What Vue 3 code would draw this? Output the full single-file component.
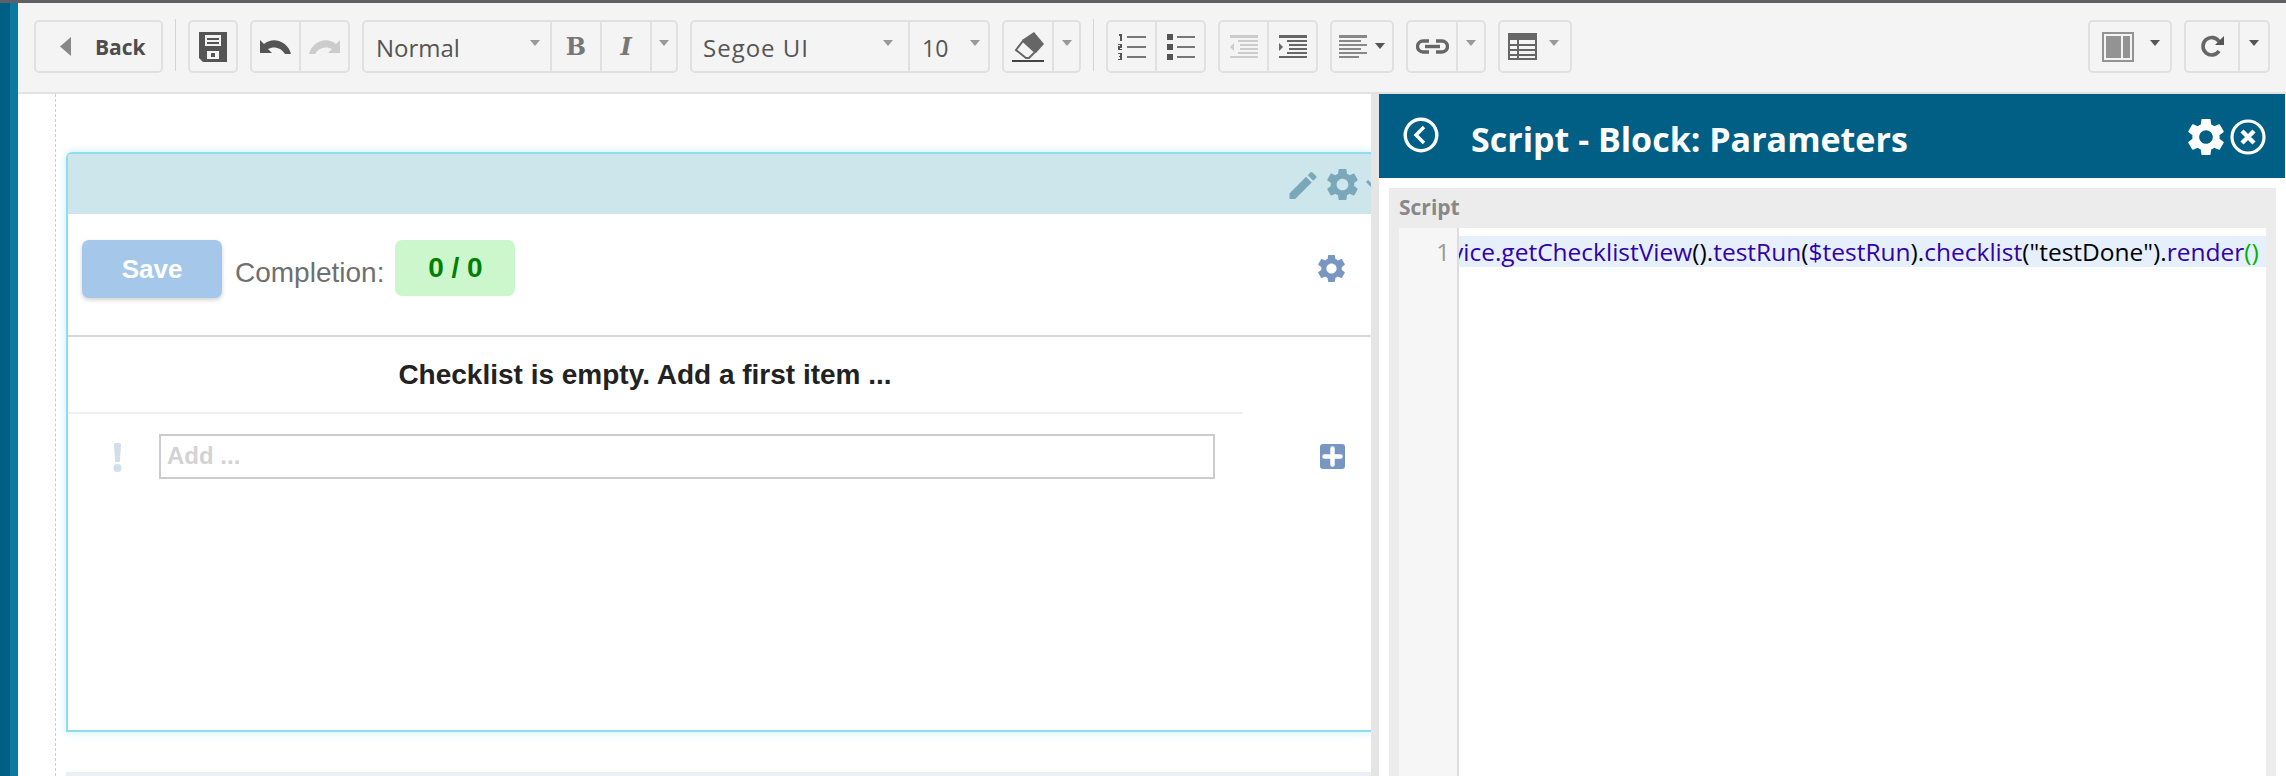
<script setup>
const GEAR = 'M19.14 12.94c.04-.3.06-.61.06-.94 0-.32-.02-.64-.07-.94l2.03-1.58c.18-.14.23-.41.12-.61l-1.92-3.32c-.12-.22-.37-.29-.59-.22l-2.39.96c-.5-.38-1.03-.7-1.62-.94l-.36-2.54c-.04-.24-.24-.41-.48-.41h-3.84c-.24 0-.43.17-.47.41l-.36 2.54c-.59.24-1.13.57-1.62.94l-2.39-.96c-.22-.08-.47 0-.59.22L2.74 8.87c-.12.21-.08.47.12.61l2.03 1.58c-.05.3-.09.63-.09.94s.02.64.07.94l-2.03 1.58c-.18.14-.23.41-.12.61l1.92 3.32c.12.22.37.29.59.22l2.39-.96c.5.38 1.03.7 1.62.94l.36 2.54c.05.24.24.41.48.41h3.84c.24 0 .44-.17.47-.41l.36-2.54c.59-.24 1.13-.56 1.62-.94l2.39.96c.22.08.47 0 .59-.22l1.92-3.32c.12-.22.07-.47-.12-.61l-2.01-1.58zM12 15.6c-1.98 0-3.6-1.62-3.6-3.6s1.62-3.6 3.6-3.6 3.6 1.62 3.6 3.6-1.62 3.6-3.6 3.6z'
const PENCIL = 'M3 17.25V21h3.75L17.81 9.94l-3.75-3.75L3 17.25zM20.71 7.04c.39-.39.39-1.02 0-1.41l-2.34-2.34c-.39-.39-1.02-.39-1.41 0l-1.83 1.83 3.75 3.75 1.83-1.83z'
</script>

<template>
  <div class="page">
    <div class="topline"></div>
    <div class="body">
      <div class="strip"><div class="strip-dark"></div><div class="strip-light"></div></div>
      <div class="workspace">
        <div class="toolbar">
          <div class="grp w129"><div class="cell back">
            <svg class="i-back" viewBox="0 0 11 19"><path d="M11 0v19L0 9.5z" fill="#888"/></svg>
            <span>Back</span>
          </div></div>
          <div class="sep"></div>
          <div class="grp w50"><div class="cell fill">
            <svg width="28" height="30" viewBox="0 0 28 30"><path fill-rule="evenodd" fill="#555" d="M0 0h28v30H4l-4-4zM6 3v11h16V3zM8 19v8h12v-8zM8 6h12v2H8zM8 10h12v2H8zM12 21h4v4h-4z"/></svg>
          </div></div>
          <div class="grp w100">
            <div class="cell c50">
              <svg width="31" height="15" viewBox="0 0 31 15"><path fill="#555" d="M0 1v13h12L8 10c5-3 13-2 17 5h6C28 3 14-3 4 5z"/></svg>
            </div>
            <div class="cell c50 div">
              <svg width="31" height="15" viewBox="0 0 31 15"><path fill="#ccc" d="M31 1v13H19l4-4c-5-3-13-2-17 5H0C3 3 17-3 27 5z"/></svg>
            </div>
          </div>
          <div class="grp w316">
            <div class="cell sel normal"><span class="tb-txt">Normal</span><i class="caret"></i></div>
            <div class="cell c50 div"><span class="fmt b">B</span></div>
            <div class="cell c50 div"><span class="fmt it">I</span></div>
            <div class="cell c26 div"><i class="caret sm"></i></div>
          </div>
          <div class="grp w300">
            <div class="cell sel font"><span class="tb-txt wide">Segoe UI</span><i class="caret"></i></div>
            <div class="cell sel size div"><span class="tb-txt ten">10</span><i class="caret"></i></div>
          </div>
          <div class="grp w79">
            <div class="cell c50">
              <svg width="32" height="30" viewBox="0 0 32 30"><path fill="#666" d="M22 0l10 12-8 9L10 8z"/><path fill="none" stroke="#666" stroke-width="2" d="M11 9l12 11-6 6h-3L4 18z"/><rect y="28" width="32" height="2" fill="#444"/></svg>
            </div>
            <div class="cell c28 div"><i class="caret sm"></i></div>
          </div>
          <div class="sep"></div>
          <div class="grp w100">
            <div class="cell c50">
              <svg width="28" height="27" viewBox="0 0 28 27"><path fill="#555" d="M1 1h3v7H2V3H1zM0 11h4v4H2v1h2v1H0v-4h2v-1H0zM0 20h4v7H0v-1h2v-2H1v-1h1v-2H0z"/><path fill="#777" d="M9 3h19v2H9zM9 13h19v2H9zM9 23h19v2H9z"/></svg>
            </div>
            <div class="cell c50 div">
              <svg width="28" height="27" viewBox="0 0 28 27"><path fill="#555" d="M0 1h6v6H0zM0 11h6v6H0zM0 21h6v6H0z"/><path fill="#777" d="M10 3h18v2H10zM10 13h18v2H10zM10 23h18v2H10z"/></svg>
            </div>
          </div>
          <div class="grp w100">
            <div class="cell c50">
              <svg width="28" height="23" viewBox="0 0 28 23"><path fill="#ccc" d="M0 0h28v3H0zM8 5h20v2H8zM10 9h18v2H10zM10 13h18v2H10zM8 17h20v2H8zM0 21h28v2H0zM4 8v8l-4-4z"/></svg>
            </div>
            <div class="cell c50 div">
              <svg width="28" height="23" viewBox="0 0 28 23"><path fill="#666" d="M0 0h28v3H0zM8 5h20v2H8zM10 9h18v2H10zM10 13h18v2H10zM8 17h20v2H8zM0 21h28v2H0zM0 8v8l4-4z"/></svg>
            </div>
          </div>
          <div class="grp w64"><div class="cell fill align">
            <svg width="28" height="23" viewBox="0 0 28 23"><path fill="#888" d="M0 0h28v3H0zM0 5h22v2H0zM0 9h28v2H0zM0 13h22v2H0zM0 17h28v2H0zM0 21h20v2H0z"/></svg>
            <i class="caret dark"></i>
          </div></div>
          <div class="grp w80">
            <div class="cell c50">
              <svg width="33" height="15" viewBox="0 0 33 15"><g fill="none" stroke="#666" stroke-width="3.4"><path d="M13 2H7a5.5 5.5 0 0 0 0 11h6"/><path d="M20 2h6a5.5 5.5 0 0 1 0 11h-6"/><path d="M9 7.5h15"/></g></svg>
            </div>
            <div class="cell c28 div"><i class="caret sm"></i></div>
          </div>
          <div class="grp w74"><div class="cell fill tbl">
            <svg width="29" height="27" viewBox="0 0 29 27"><path fill="#666" fill-rule="evenodd" d="M0 0h29v27H0zM2 7v4h7V7zM11 7v4h16V7zM2 13v3h7v-3zM11 13v3h16v-3zM2 18v3h7v-3zM11 18v3h16v-3zM2 23v2h7v-2zM11 23v2h16v-2z"/></svg>
            <i class="caret sm"></i>
          </div></div>

          <div class="grp w84 right-start"><div class="cell fill cols">
            <svg width="32" height="30" viewBox="0 0 32 30"><path fill="#939393" fill-rule="evenodd" d="M0 0h32v30H0zM2 2v26h28V2z"/><path fill="#939393" d="M4 4h15v22H4zM21 4h7v22h-7z"/></svg>
            <i class="caret dark"></i>
          </div></div>
          <div class="grp w86">
            <div class="cell reload">
              <svg width="23" height="23" viewBox="0 0 23 23"><path fill="none" stroke="#666" stroke-width="3.6" d="M18 16a8.7 8.7 0 1 1 0-9.5"/><path fill="#555" d="M23 1v9h-9z"/></svg>
            </div>
            <div class="cell c30 div"><i class="caret dark"></i></div>
          </div>
        </div>

        <div class="main">
          <div class="canvas">
            <div class="guide">
              <section class="card">
                <header class="card-head">
                  <svg class="pencil" viewBox="3 3 18 18"><path :d="PENCIL"/></svg>
                  <svg class="h-gear" viewBox="2.5 2.5 19 19"><path :d="GEAR"/></svg>
                  <svg class="h-chev" viewBox="0 0 12 8"><path d="M1 1l5 5 5-5" fill="none" stroke="#7ba7bb" stroke-width="3"/></svg>
                </header>
                <div class="actions">
                  <button class="save">Save</button>
                  <span class="compl">Completion:</span>
                  <span class="badge">0 / 0</span>
                  <svg class="a-gear" viewBox="2.5 2.5 19 19"><path :d="GEAR"/></svg>
                </div>
                <h2 class="empty">Checklist is empty. Add a first item ...</h2>
                <div class="add">
                  <svg class="excl" viewBox="0 0 9 29"><path d="M1 1.500Q1 0 2.500 0h4Q8 0 8 1.500L7 18q0 1-1 1H3q-1 0-1-1zM4.500 21a4 4 0 1 1 0 8 4 4 0 1 1 0-8z"/></svg>
                  <div class="input">Add ...</div>
                  <svg class="plus" viewBox="0 0 25 25"><rect width="25" height="25" rx="3" fill="#7896c2"/><path d="M4.500 12.500h16M12.500 4.500v16" stroke="#fff" stroke-width="4.500" stroke-linecap="round"/></svg>
                </div>
              </section>
              <div class="next"></div>
            </div>
          </div>

          <aside class="panel">
            <div class="panel-head">
              <svg class="p-back" viewBox="0 0 36 36"><circle cx="18" cy="18" r="15.800" fill="none" stroke="#fff" stroke-width="3.400"/><path d="M21 10l-8 8 8 8" fill="none" stroke="#fff" stroke-width="3.400"/></svg>
              <h1 class="p-title">Script - Block: Parameters</h1>
              <svg class="p-gear" viewBox="2.500 2.500 19 19"><path :d="GEAR" fill="#fff"/></svg>
              <svg class="p-close" viewBox="0 0 36 36"><circle cx="18" cy="18" r="16" fill="none" stroke="#fff" stroke-width="3.200"/><path d="M12 12l12 12M24 12L12 24" fill="none" stroke="#fff" stroke-width="4.400"/></svg>
            </div>
            <div class="p-section">
              <div class="p-label">Script</div>
              <div class="editor">
                <div class="gutter"><div class="ln">1</div></div>
                <div class="code"><div class="line"><span class="nm">vice.getChecklistView</span><span class="pn">()</span><span class="pn">.</span><span class="nm">testRun</span><span class="pn">(</span><span class="nm">$testRun</span><span class="pn">).</span><span class="nm">checklist</span><span class="pn">("testDone").</span><span class="nm">render</span><span class="ok">()</span></div></div>
              </div>
            </div>
          </aside>
        </div>
      </div>
    </div>
  </div>
</template>

<style scoped>
.page { width: 2286px; height: 776px; overflow: hidden; display: flex; flex-direction: column; background: #fff; font-family: "Liberation Sans", Arial, sans-serif; }
.topline { height: 3px; background: #5f5f64; flex: none; }
.body { flex: 1; display: flex; min-height: 0; }
.strip { width: 18px; flex: none; display: flex; }
.strip-dark { width: 10px; background: #005f87; }
.strip-light { width: 8px; background: #0b7a9f; }
.workspace { flex: 1; display: flex; flex-direction: column; min-width: 0; }

.toolbar { flex: none; border-bottom: 2px solid #e2e2e2; background: #f4f4f4; display: flex; align-items: flex-start; gap: 12px; padding: 17px 16px 0; box-sizing: border-box; height: 91px; font-family: "Open Sans", "Liberation Sans", sans-serif; }
.grp { height: 53px; box-sizing: border-box; border: 2px solid #e0e0e0; border-radius: 5px; display: flex; flex: none; }
.sep { width: 1px; height: 52px; margin-top: -1px; background: #d4d4d4; flex: none; }
.w129 { width: 129px; } .w50 { width: 50px; } .w100 { width: 100px; } .w316 { width: 316px; } .w300 { width: 300px; }
.w79 { width: 79px; } .w64 { width: 64px; } .w80 { width: 80px; } .w74 { width: 74px; } .w84 { width: 84px; } .w86 { width: 86px; }
.right-start { margin-left: auto; }
.cell { display: flex; align-items: center; justify-content: center; box-sizing: border-box; height: 100%; }
.fill { width: 100%; }
.div { border-left: 2px solid #e0e0e0; }
.c50 { width: 50px; } .c50:first-child { width: 48px; }
.c26 { width: 26px; } .c28 { width: 27px; } .c30 { width: 30px; }
.back { width: 100%; justify-content: flex-start; padding-left: 24px; font-weight: 700; font-size: 21px; color: #4d4d4d; }
.i-back { width: 11px; height: 19px; margin-right: 24px; }
.sel { justify-content: space-between; }
.normal { width: 186px; padding: 0 10px 0 12px; }
.font { width: 216px; padding: 0 15px 0 11px; }
.size { width: 80px; padding: 0 8px 0 12px; }
.tb-txt { font-size: 24px; color: #555; position: relative; top: 1px; }
.wide { letter-spacing: 1px; }
.ten { font-size: 23px; }
.caret { display: block; width: 0; height: 0; border-left: 5.500px solid transparent; border-right: 5.500px solid transparent; border-top: 6px solid #999; margin-top: -8px; flex: none; }
.caret.sm { border-left-width: 5px; border-right-width: 5px; }
.caret.dark { border-top-color: #555; }
.fmt { font-family: "DejaVu Serif", serif; font-weight: 700; font-size: 24px; color: #777; line-height: 1; }
.it { font-style: italic; }
.align { justify-content: flex-start; padding-left: 7px; gap: 8px; }
.align .caret { margin-top: -2px; }
.tbl { justify-content: flex-start; padding-left: 8px; gap: 12px; }
.cols { justify-content: flex-start; padding-left: 12px; gap: 16px; }
.reload { width: 53px; }

.main { flex: 1; display: flex; min-height: 0; }
.canvas { width: 1353px; flex: none; overflow: hidden; background: #fff; }
.guide { margin-left: 37px; height: 100%; border-left: 1px dashed #ccc; padding-left: 10px; padding-top: 58px; box-sizing: border-box; }
.card { height: 580px; box-sizing: border-box; border: 2px solid #8fdcef; border-right: 0; border-radius: 6px 0 0 0; box-shadow: 0 0 8px rgba(143, 220, 239, .55); display: flex; flex-direction: column; background: #fff; }
.card-head { height: 60px; flex: none; background: #cde6eb; position: relative; display: flex; align-items: center; overflow: hidden; padding-left: 1221px; }
.pencil { width: 28px; height: 27px; fill: #7ba7bb; flex: none; margin-top: 2px; }
.h-gear { width: 31px; height: 31px; fill: #7ba7bb; margin-left: 10px; flex: none; }
.h-chev { width: 12px; height: 8px; margin-left: 8px; flex: none; }
.actions { height: 123px; flex: none; box-sizing: border-box; border-bottom: 2px solid #d5d8dc; display: flex; align-items: flex-start; padding: 26px 26px 0 14px; }
.save { width: 140px; height: 58px; border: 0; border-radius: 7px; background: #a5c8ea; color: #fff; font: 700 26px "Liberation Sans", Arial, sans-serif; box-shadow: 0 2px 4px rgba(0, 0, 0, .18); }
.compl { margin-left: 13px; margin-top: 14px; font-size: 28px; line-height: 38px; color: #6f6f6f; }
.badge { margin-left: 11px; width: 120px; height: 56px; border-radius: 7px; background: #ccf7cd; color: #008000; font-weight: 700; font-size: 28px; display: flex; align-items: center; justify-content: center; }
.a-gear { width: 27px; height: 27px; fill: #7896c2; margin-left: auto; margin-top: 15px; }
.empty { margin: 0; width: 1175px; height: 77px; box-sizing: border-box; padding-right: 21px; border-bottom: 2px solid #f0f0f0; text-align: center; font-size: 28px; line-height: 76px; font-weight: 700; color: #222; }
.add { display: flex; align-items: flex-start; padding-top: 20px; }
.excl { width: 9px; height: 29px; fill: #d3deeb; margin: 9px 37px 0 45px; flex: none; }
.input { width: 1056px; height: 45px; box-sizing: border-box; border: 2px solid #ccc; padding-left: 6px; font-size: 24px; line-height: 39px; font-weight: 700; color: #d3d3d3; flex: none; }
.plus { width: 25px; height: 25px; margin: 10px 0 0 105px; flex: none; }
.next { height: 20px; margin-top: 40px; background: #e9eff3; }

.panel { flex: 1; min-width: 0; border-left: 8px solid #e5e5e5; display: flex; flex-direction: column; background: #fff; font-family: "Open Sans", "Liberation Sans", sans-serif; }
.panel-head { height: 84px; flex: none; background: #015f86; display: flex; align-items: center; position: relative; margin-right: 1px; }
.p-back { width: 36px; height: 36px; margin-left: 24px; flex: none; margin-top: -2px; }
.p-title { margin: 6px 0 0 32px; font-size: 34px; line-height: 44px; font-weight: 700; color: #fff; flex: none; }
.p-gear { width: 36px; height: 36px; margin-left: auto; flex: none; margin-top: 2px; }
.p-close { width: 36px; height: 36px; margin: 2px 19px 0 6px; flex: none; }
.p-section { flex: 1; margin: 10px 10px 0; background: #ececec; display: flex; flex-direction: column; min-height: 0; }
.p-label { height: 40px; flex: none; padding-left: 10px; font-size: 21px; font-weight: 700; color: #888; line-height: 38px; }
.editor { flex: 1; margin: 0 10px; background: #fff; display: flex; min-height: 0; }
.gutter { width: 60px; flex: none; box-sizing: border-box; background: #f6f6f6; border-right: 2px solid #ddd; padding: 8px 7px 0 0; text-align: right; }
.ln { font-size: 24px; line-height: 31px; color: #999; }
.code { flex: 1; min-width: 0; overflow: hidden; padding-top: 8px; }
.line { height: 31px; background: #e6f0fc; font-size: 24.500px; line-height: 31px; white-space: nowrap; text-indent: -8px; }
.nm { color: #3300aa; } .pn { color: #000; } .ok { color: #00b000; }
</style>

<style>
html, body { margin: 0; padding: 0; overflow: hidden; background: #fff; }
</style>
